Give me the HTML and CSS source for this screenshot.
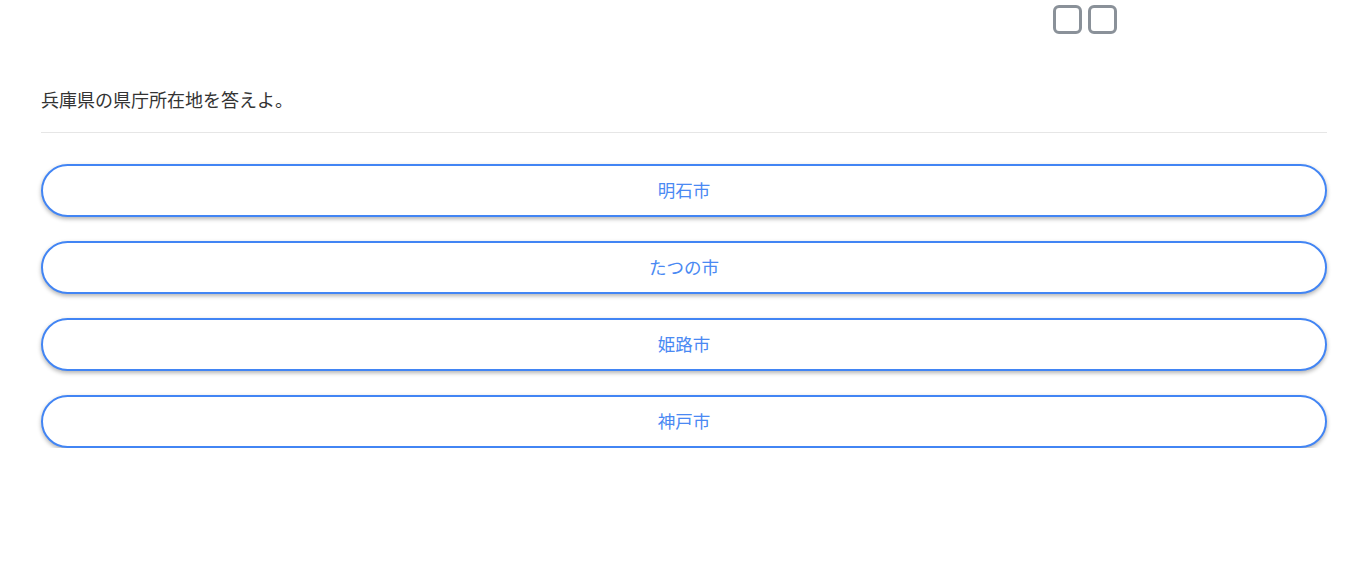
FILE: index.html
```html
<!DOCTYPE html>
<html lang="ja">
<head>
<meta charset="utf-8">
<link rel="stylesheet" href="styles.css">
</head>
<body>
<div class="page">
  <div class="top">
    <span class="box"></span>
    <span class="box"></span>
  </div>
  <p class="question">兵庫県の県庁所在地を答えよ。</p>
  <hr class="rule">
  <div class="choices">
    <button class="choice">明石市</button>
    <button class="choice">たつの市</button>
    <button class="choice">姫路市</button>
    <button class="choice">神戸市</button>
  </div>
</div>
</body>
</html>
```
FILE: styles.css
```css
html, body {
  margin: 0;
  padding: 0;
  background: #fff;
}
body {
  font-family: "Noto Sans CJK JP", "Noto Sans", sans-serif;
  color: #333;
}
.page {
  padding: 0 41px;
}
.top {
  display: flex;
  gap: 6px;
  padding-top: 5px;
  padding-left: 1012px;
  height: 35px;
}
.box {
  width: 29px;
  height: 29px;
  box-sizing: border-box;
  border: 3px solid #8a9199;
  border-radius: 6px;
}
.question {
  margin: 0;
  padding-top: 46px;
  font-size: 18px;
  line-height: 26px;
  color: #333;
}
.rule {
  border: 0;
  border-top: 1px solid #e6e6e6;
  margin: 20px 0 0 0;
}
.choices {
  display: flex;
  flex-direction: column;
  gap: 24px;
  padding-top: 31px;
}
.choice {
  display: block;
  width: 100%;
  height: 53px;
  box-sizing: border-box;
  border: 2px solid #4285f4;
  border-radius: 27px;
  background: #fff;
  color: #4a89f3;
  font-family: "Noto Sans CJK JP", "Noto Sans", sans-serif;
  font-size: 17.5px;
  box-shadow: 0 2px 4px rgba(0, 0, 0, 0.3);
  padding: 0 0 3px 0;
}
```
